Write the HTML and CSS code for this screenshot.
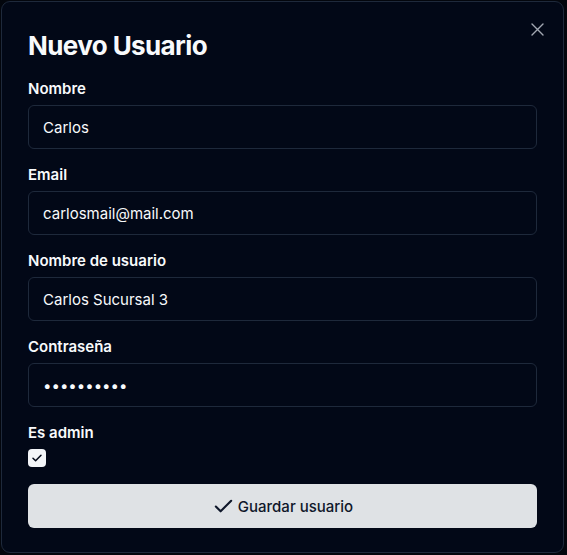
FILE: index.html
```html
<!DOCTYPE html>
<html lang="es">
<head>
<meta charset="utf-8">
<title>Nuevo Usuario</title>
<link rel="stylesheet" href="styles.css">
</head>
<body>
<div class="dialog">
  <button class="close" type="button" aria-label="Cerrar">
    <svg width="13" height="13" viewBox="0 0 13 13" fill="none" stroke="currentColor" stroke-width="1.4" stroke-linecap="round"><path d="M1 1 12 12M12 1 1 12"/></svg>
  </button>
  <h2 class="title">Nuevo Usuario</h2>
  <form class="form">
    <div class="field">
      <label class="label">Nombre</label>
      <input class="input" type="text" value="Carlos">
    </div>
    <div class="field">
      <label class="label">Email</label>
      <input class="input" type="text" value="carlosmail@mail.com">
    </div>
    <div class="field">
      <label class="label">Nombre de usuario</label>
      <input class="input" type="text" value="Carlos Sucursal 3">
    </div>
    <div class="field">
      <label class="label">Contraseña</label>
      <input class="input pass" type="password" value="contrasena">
    </div>
    <div class="field check-field">
      <label class="label">Es admin</label>
      <span class="checkbox">
        <svg width="12" height="12" viewBox="0 0 12 12" fill="none" stroke="currentColor" stroke-width="1.5" stroke-linecap="round" stroke-linejoin="round"><path d="M2 6.3 4.6 8.8 10 3.2"/></svg>
      </span>
    </div>
    <button class="submit" type="button">
      <svg width="23" height="23" viewBox="0 0 24 24" fill="none" stroke="currentColor" stroke-width="2.2" stroke-linecap="round" stroke-linejoin="round"><path d="M20 6 9 17l-5-5"/></svg>
      <span>Guardar usuario</span>
    </button>
  </form>
</div>
</body>
</html>
```
FILE: styles.css
```css
* { box-sizing: border-box; }
html, body { margin: 0; padding: 0; }
body {
  background: #03060d;
  font-family: Inter, "Noto Sans", sans-serif;
  color: #f8fafc;
  padding: 1px 0 0 1px;
}
.dialog {
  position: relative;
  width: 563px;
  border: 1px solid #1e293b;
  border-radius: 9px;
  background: #020817;
  padding: 26px 26px 24px;
}
.close {
  position: absolute;
  top: 21px;
  right: 19px;
  padding: 0;
  border: 0;
  background: none;
  color: #a2a8b2;
  display: flex;
}
.title {
  margin: 0;
  font-size: 26px;
  line-height: 36px;
  font-weight: 700;
  letter-spacing: -0.6px;
  color: #f8fafc;
}
.form {
  display: flex;
  flex-direction: column;
  margin-top: 15px;
}
.field {
  display: flex;
  flex-direction: column;
  gap: 6px;
  margin-bottom: 16px;
}
.label {
  font-size: 15px;
  line-height: 20px;
  font-weight: 600;
  color: #f8fafc;
}
.input {
  height: 44px;
  width: 100%;
  border: 1px solid #1e293b;
  border-radius: 6px;
  background: transparent;
  color: #f8fafc;
  font-family: Inter, "Noto Sans", sans-serif;
  font-size: 15px;
  padding: 0 14px;
  outline: none;
}
.check-field { gap: 6px; margin-bottom: 17px; }
.checkbox {
  width: 18px;
  height: 18px;
  border-radius: 4px;
  background: #f3f5f8;
  color: #020817;
  display: flex;
  align-items: center;
  justify-content: center;
}
.submit {
  height: 44px;
  width: 100%;
  border: 0;
  border-radius: 6px;
  background: #dfe2e5;
  color: #0f172a;
  font-family: Inter, "Noto Sans", sans-serif;
  font-size: 15px;
  font-weight: 500;
  display: flex;
  align-items: center;
  justify-content: center;
  gap: 3px;
  padding: 0;
}
```
